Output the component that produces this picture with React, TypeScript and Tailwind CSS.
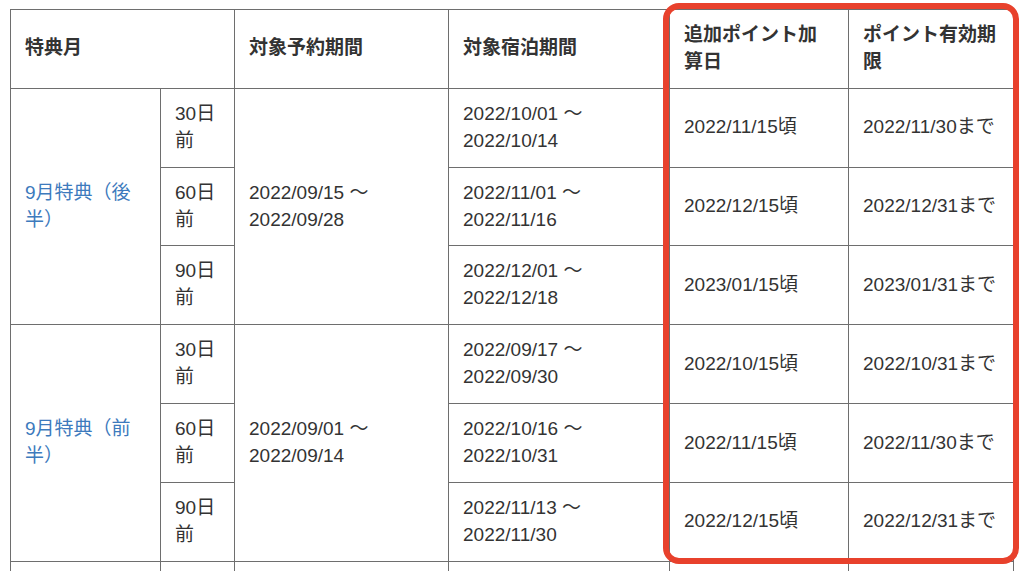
const groups = [
  {
    label: "9月特典（後半）",
    booking: ["2022/09/15 〜", "2022/09/28"],
    rows: [
      { days: "30日前", stay: ["2022/10/01 〜", "2022/10/14"], add: "2022/11/15頃", limit: "2022/11/30まで" },
      { days: "60日前", stay: ["2022/11/01 〜", "2022/11/16"], add: "2022/12/15頃", limit: "2022/12/31まで" },
      { days: "90日前", stay: ["2022/12/01 〜", "2022/12/18"], add: "2023/01/15頃", limit: "2023/01/31まで" },
    ],
  },
  {
    label: "9月特典（前半）",
    booking: ["2022/09/01 〜", "2022/09/14"],
    rows: [
      { days: "30日前", stay: ["2022/09/17 〜", "2022/09/30"], add: "2022/10/15頃", limit: "2022/10/31まで" },
      { days: "60日前", stay: ["2022/10/16 〜", "2022/10/31"], add: "2022/11/15頃", limit: "2022/11/30まで" },
      { days: "90日前", stay: ["2022/11/13 〜", "2022/11/30"], add: "2022/12/15頃", limit: "2022/12/31まで" },
    ],
  },
];

const cell = "border border-[#6e6e6e] px-[14px] py-3 align-middle text-left";

export default function App() {
  return (
    <div
      className="relative h-[571px] w-[1024px] overflow-hidden bg-white text-[19px] leading-[26.9px] text-[#333]"
      style={{ fontFamily: '"Liberation Sans", "Noto Sans CJK JP", sans-serif' }}
    >
      <table className="ml-[10px] mt-[9px] w-[1003px] table-fixed border-collapse">
        <colgroup>
          <col className="w-[150px]" />
          <col className="w-[74px]" />
          <col className="w-[214px]" />
          <col className="w-[221px]" />
          <col className="w-[179px]" />
          <col className="w-[165px]" />
        </colgroup>
        <thead>
          <tr className="font-bold">
            <th colSpan={2} className={cell}>特典月</th>
            <th className={cell}>対象予約期間</th>
            <th className={cell}>対象宿泊期間</th>
            <th className={cell}>追加ポイント加算日</th>
            <th className={cell}>ポイント有効期限</th>
          </tr>
        </thead>
        <tbody>
          {groups.map((g) =>
            g.rows.map((r, i) => (
              <tr key={g.label + r.days}>
                {i === 0 && (
                  <td rowSpan={3} className={`${cell} text-[#3d7abd]`}>{g.label}</td>
                )}
                <td className={cell}>{r.days}</td>
                {i === 0 && (
                  <td rowSpan={3} className={cell}>
                    {g.booking[0]}
                    <br />
                    {g.booking[1]}
                  </td>
                )}
                <td className={cell}>
                  {r.stay[0]}
                  <br />
                  {r.stay[1]}
                </td>
                <td className={cell}>{r.add}</td>
                <td className={cell}>{r.limit}</td>
              </tr>
            ))
          )}
          {/* next group continues below the fold */}
          <tr className="h-[78px]">
            <td className={cell} />
            <td className={cell} />
            <td className={cell} />
            <td className={cell} />
            <td className={cell} />
            <td className={cell} />
          </tr>
        </tbody>
      </table>
      <div className="pointer-events-none absolute left-[663px] top-[3px] h-[561px] w-[356px] rounded-[16px] border-[6px] border-[#e8412c]" />
    </div>
  );
}
